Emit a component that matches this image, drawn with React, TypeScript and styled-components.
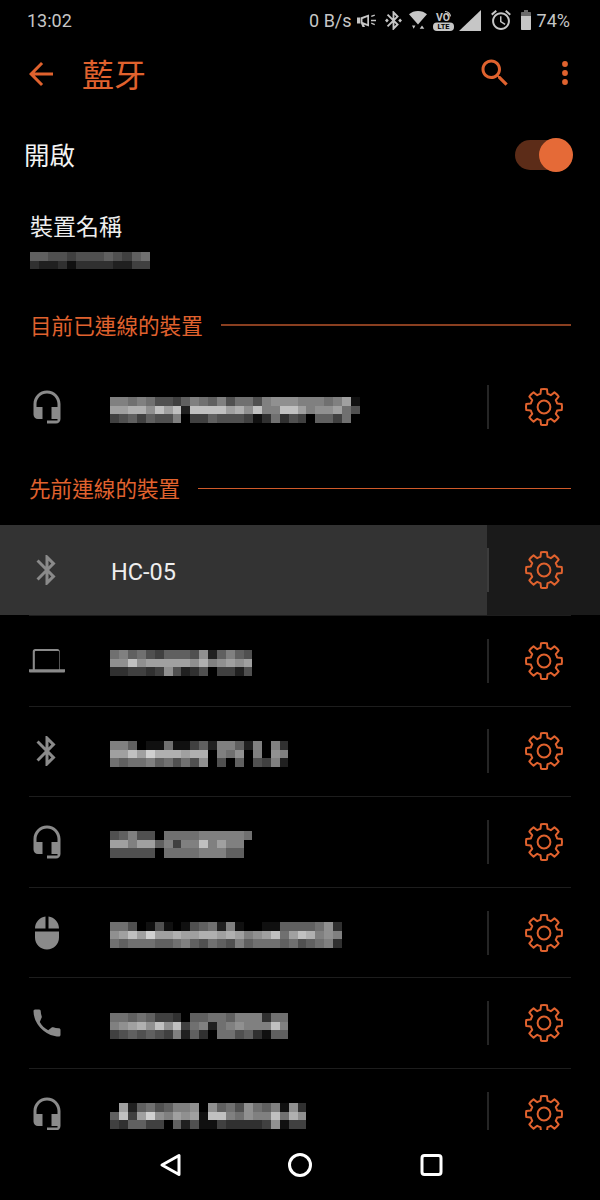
import React from "react";
import styled, { createGlobalStyle } from "styled-components";

const ORANGE = "#e0622e";
const GREY = "#8a8a8a";
const STATUS = "#c6c6c6";

const GlobalStyle = createGlobalStyle`
  html, body { margin: 0; padding: 0; background: #000; }
  body { font-family: Roboto, "Noto Sans CJK TC", sans-serif; }
`;

const Page = styled.div`
  position: relative;
  width: 600px;
  height: 1200px;
  overflow: hidden;
  background: #000;
  display: flex;
  flex-direction: column;
`;

const StatusBar = styled.div`
  flex: none;
  height: 40px;
  padding: 0 30px 0 27px;
  display: flex;
  align-items: center;
  justify-content: space-between;
  color: ${STATUS};
  font-size: 18px;
`;

const StatusGroup = styled.div`
  display: flex;
  align-items: center;
`;

const StatusText = styled.span<{ $after?: number }>`
  margin-right: ${(p) => p.$after ?? 0}px;
  white-space: nowrap;
`;

const StatusIcon = styled.svg<{ $after?: number }>`
  display: block;
  flex: none;
  fill: ${STATUS};
  margin-right: ${(p) => p.$after ?? 0}px;
`;

const Toolbar = styled.div`
  flex: none;
  height: 72px;
  display: flex;
  align-items: center;
  padding: 0 32px 0 23px;
  margin-top: -2px;
  margin-bottom: 2px;
`;

const ToolIcon = styled.svg<{ $lift?: number }>`
  display: block;
  flex: none;
  width: 36px;
  height: 36px;
  fill: ${ORANGE};
  margin-top: ${(p) => -(p.$lift ?? 0)}px;
`;

const Title = styled.div`
  margin: 4px 0 0 23px;
  flex: 1;
  color: ${ORANGE};
  font-size: 32px;
  line-height: 40px;
`;

const MenuDots = styled.svg`
  display: block;
  flex: none;
  width: 6px;
  height: 26px;
  margin: -2px 0 0 49.5px;
  fill: ${ORANGE};
`;

const SwitchRow = styled.div`
  flex: none;
  height: 86px;
  display: flex;
  align-items: center;
  justify-content: space-between;
  padding: 0 27px 0 24px;
`;

const SwitchLabel = styled.div`
  color: #f2f2f2;
  font-size: 25.5px;
  line-height: 34px;
  margin-top: 2px;
`;

const Track = styled.div`
  position: relative;
  width: 50px;
  height: 30px;
  margin-right: 8px;
  border-radius: 15px;
  background: #5c2c18;
`;

const Knob = styled.div`
  position: absolute;
  top: -2px;
  right: -8px;
  width: 34px;
  height: 34px;
  border-radius: 50%;
  background: #e56a37;
`;

const DeviceName = styled.div`
  flex: none;
  padding: 15px 0 0 30px;
  display: flex;
  flex-direction: column;
  align-items: flex-start;
  gap: 9px;
`;

const DeviceLabel = styled.div`
  color: #eeeeee;
  font-size: 23px;
  line-height: 30px;
`;

const SectionHeader = styled.div<{ $top: number; $left: number; $bottom: number }>`
  flex: none;
  height: 40px;
  margin: ${(p) => p.$top}px 29px ${(p) => p.$bottom}px ${(p) => p.$left}px;
  display: flex;
  align-items: center;
  gap: 18px;
`;

const SectionTitle = styled.div`
  color: ${ORANGE};
  font-size: 21.6px;
  line-height: 30px;
  white-space: nowrap;
`;

const SectionLine = styled.div<{ $color: string; $thick?: number }>`
  flex: 1;
  height: ${(p) => p.$thick ?? 1}px;
  margin-top: -4px;
  background: ${(p) => p.$color};
`;

const Row = styled.div<{ $active?: boolean; $height: number }>`
  flex: none;
  height: ${(p) => p.$height}px;
  display: flex;
  background: ${(p) => (p.$active ? "#333333" : "#000")};
`;

const RowMain = styled.div`
  flex: 1;
  min-width: 0;
  display: flex;
  align-items: center;
  padding-left: 28.5px;
  gap: 45px;
`;

const DeviceIcon = styled.svg`
  display: block;
  flex: none;
  width: 36px;
  height: 36px;
  fill: ${GREY};
`;

const DeviceTitle = styled.div`
  color: #eeeeee;
  font-size: 23.5px;
  line-height: 30px;
  margin: 3px 0 0 1.5px;
`;

const GearCell = styled.div<{ $active?: boolean }>`
  flex: none;
  width: 113px;
  display: flex;
  align-items: center;
  background: ${(p) => (p.$active ? "#1a1a1a" : "transparent")};
`;

const VRule = styled.div<{ $active?: boolean }>`
  flex: none;
  width: 2px;
  height: 44px;
  background: ${(p) => (p.$active ? "#3c3c3c" : "#252525")};
`;

const Gear = styled.svg`
  display: block;
  flex: none;
  width: 40px;
  height: 40px;
  margin-left: 35px;
  fill: none;
  stroke: ${ORANGE};
  stroke-width: 2;
  stroke-linejoin: round;
`;

const RowRule = styled.div`
  flex: none;
  height: 1px;
  margin: 0 29px;
  background: #1d1d1d;
`;

const MosaicSvg = styled.svg<{ $drop?: number }>`
  display: block;
  flex: none;
  margin-top: ${(p) => p.$drop ?? 0}px;
`;

const NavBar = styled.div`
  position: absolute;
  left: 0;
  right: 0;
  bottom: 0;
  height: 70px;
  background: #000;
  display: flex;
  align-items: center;
  justify-content: center;
  gap: 104.5px;
`;

const NavIcon = styled.svg`
  display: block;
  flex: none;
  width: 26px;
  height: 26px;
  fill: none;
  stroke: #ffffff;
  stroke-width: 3;
  stroke-linejoin: round;
`;

const gearPath = (() => {
  const c = 20;
  const outer = 18;
  const inner = 13.6;
  const n = 8;
  const pt = (r: number, deg: number) => {
    const a = ((deg - 90) * Math.PI) / 180;
    return `${(c + r * Math.cos(a)).toFixed(2)} ${(c + r * Math.sin(a)).toFixed(2)}`;
  };
  let d = "";
  for (let i = 0; i < n; i++) {
    const t = (360 / n) * i;
    d += `${i === 0 ? "M" : "L"}${pt(inner, t - 15)} `;
    d += `L${pt(outer, t - 9.5)} A${outer} ${outer} 0 0 1 ${pt(outer, t + 9.5)} `;
    d += `L${pt(inner, t + 15)} `;
    d += `A${inner} ${inner} 0 0 1 ${pt(inner, t + 30)} `;
  }
  return d + "Z";
})();

const CELL_H = 8.7;

function Mosaic({ rows, cellW = 8.93, drop = 5 }: { rows: string[]; cellW?: number; drop?: number }) {
  const cols = rows[0].length;
  const w = cols * cellW;
  const h = rows.length * CELL_H;
  return (
    <MosaicSvg $drop={drop} width={w} height={h} viewBox={`0 0 ${w} ${h}`} shapeRendering="crispEdges">
      {rows.flatMap((row, y) =>
        row.split("").map((ch, x) => {
          const v = Math.min(255, parseInt(ch, 16) * 16);
          return (
            <rect
              key={`${x}-${y}`}
              x={x * cellW}
              y={y * CELL_H}
              width={cellW + 0.5}
              height={CELL_H + 0.5}
              fill={`rgb(${v},${v},${v})`}
            />
          );
        })
      )}
    </MosaicSvg>
  );
}

const HEADSET =
  "M12 1c-4.97 0-9 4.03-9 9v7c0 1.66 1.34 3 3 3h3v-8H5v-2c0-3.87 3.13-7 7-7s7 3.13 7 7v2h-4v8h4v1h-7v2h6c1.66 0 3-1.34 3-3V10c0-4.97-4.03-9-9-9z";
const BLUETOOTH =
  "M17.71 7.71L12 2h-1v7.59L6.41 5 5 6.41 10.59 12 5 17.59 6.41 19 11 14.41V22h1l5.71-5.71-4.3-4.29 4.3-4.29zM13 5.83l1.88 1.88L13 9.59V5.83zm1.88 10.46L13 18.17v-3.76l1.88 1.88z";
const LAPTOP =
  "M20.5 17.5V5.6c0-.9-.7-1.6-1.6-1.6H4.1c-.9 0-1.6.7-1.6 1.6v11.9H0V19c0 .3.3.7.7.7h22.6c.4 0 .7-.4.7-.7v-1.5h-3.5zM3.9 6.100c0-.4.3-.7.7-.7h14.800c.4 0 .7.3.7.7v11.400H3.900V6.100z";
const MOUSE =
  "M13 1.07V9h7c0-4.08-3.05-7.44-7-7.93zM4 15c0 4.42 3.58 8 8 8s8-3.58 8-8v-4H4v4zm7-13.93C7.05 1.56 4 4.92 4 9h7V1.07z";
const PHONE =
  "M7.2 11.4c1.3 2.5 3 4.1 5.6 5.5l2.3-1.9c.3-.2.6-.3 1-.2 1.2.4 2.4.7 3.7.7.6 0 1.2.4 1.2 1V20c0 .6-.5 1-1 1C11.4 21 3 13 3 4c0-.5.4-1 1-1h2.8c.6 0 1 .5 1 1 0 1.3.3 2.5.7 3.7.1.4 0 .7-.2 1l-1.1 2.7z";

const rowsData: { icon: string; rows: string[]; active?: boolean; title?: string }[] = [
  { icon: BLUETOOTH, rows: [], active: true, title: "HC-05" },
  {
    icon: LAPTOP,
    rows: ["7867546665926865", "99c9aaaaa9b89a9a", "3344349523504425"],
  },
  {
    icon: BLUETOOTH,
    rows: ["88601171146288628083", "aacadbbbabb087908098", "76778675759050605482"],
  },
  {
    icon: HEADSET,
    rows: ["5685507777888887", "aa8aa68488c8a880", "5555507777888660"],
  },
  {
    icon: MOUSE,
    rows: [
      "77501510156728100116666793",
      "9acadaabaabbaba89ac7acb898",
      "76777667865765867776756783",
    ],
  },
  {
    icon: PHONE,
    rows: ["77676443066776888377", "89ab9c9c478278988 8c8".replace(" ", ""), "45656548263077563166"],
  },
  {
    icon: HEADSET,
    rows: ["0a26756889096759768193", "6c4ad98a9a1cc87988c7b9", "4366440625114333349144"],
  },
];

function RowGear({ active }: { active?: boolean }) {
  return (
    <GearCell $active={active}>
      <VRule $active={active} />
      <Gear viewBox="0 0 40 40">
        <path d={gearPath} />
        <circle cx="20" cy="20" r="6.4" />
      </Gear>
    </GearCell>
  );
}

export default function App() {
  return (
    <Page>
      <GlobalStyle />
      <StatusBar>
        <StatusText>13:02</StatusText>
        <StatusGroup>
          <StatusText $after={5}>0 B/s</StatusText>
          <StatusIcon $after={7} width="21" height="13" viewBox="0 0 21 13">
            <path d="M0 3.5h3V9.5H0zM3.5 3.5L12 .5V12.5L3.5 9.5zM5.5 4.9V8.1L10.3 9.900V2.900z" fillRule="evenodd" />
            <path d="M4 9.5h2.5L8 13H5.5zM14 5.7h5v1.5h-5zM14 1.8l3.5-1.4.5 1.3-3.5 1.4zM14 9.8l.5-1.3 3.5 1.4-.5 1.3z" />
          </StatusIcon>
          <StatusIcon $after={7} width="17" height="19" viewBox="3 2 18 20">
            <path d="M7 12l-2-2-2 2 2 2 2-2zm10.71-4.29L12 2h-1v7.59L6.41 5 5 6.41 10.59 12 5 17.59 6.41 19 11 14.41V22h1l5.71-5.71-4.3-4.29 4.3-4.29zM13 5.83l1.88 1.88L13 9.59V5.83zm1.88 10.46L13 18.17v-3.76l1.88 1.88zM19 10l-2 2 2 2 2-2-2-2z" />
          </StatusIcon>
          <StatusIcon $after={6} width="18" height="18" viewBox="0 0 18 18">
            <path d="M9 0C5.5 0 2.3 1.2 0 3.3L9 13.500 18 3.300C15.700 1.200 12.500 0 9 0z" />
            <path d="M3 14.500h3.400L4.700 17.800zM13 14.500l2.300 3.300h-4.600z" />
          </StatusIcon>
          <StatusIcon $after={5} width="21" height="21" viewBox="0 0 21 21">
            <text x="3" y="10.5" fontFamily="Roboto, sans-serif" fontSize="10.5" fontWeight="700">VO</text>
            <path d="M12 1.500c3 .2 5 2 5.500 4.800M13 4c1.300.2 2 1 2.300 2.300" fill="none" stroke={STATUS} strokeWidth="1.2" />
            <rect x="0" y="12.5" width="21" height="8.5" rx="4" />
            <text x="10.5" y="19.3" textAnchor="middle" fontFamily="Roboto, sans-serif" fontSize="7.5" fontWeight="700" fill="#000">LTE</text>
          </StatusIcon>
          <StatusIcon $after={10} width="22" height="21" viewBox="0 0 22 21">
            <path d="M0 21L22 0V21z" />
          </StatusIcon>
          <StatusIcon $after={10} width="20" height="20" viewBox="2 1.8 20 20.2">
            <path d="M22 5.72l-4.6-3.86-1.29 1.53 4.6 3.86L22 5.72zM7.88 3.39L6.6 1.86 2 5.71l1.29 1.53 4.59-3.85zM12.5 8H11v6l4.75 2.85.75-1.23-4-2.37V8zM12 4c-4.97 0-9 4.03-9 9s4.02 9 9 9c4.97 0 9-4.03 9-9s-4.03-9-9-9zm0 16c-3.87 0-7-3.13-7-7s3.13-7 7-7 7 3.13 7 7-3.13 7-7 7z" />
          </StatusIcon>
          <StatusIcon $after={6} width="10" height="20" viewBox="0 0 10 20">
            <path d="M3 0h4v2H3z" fill="#6a6a6a" />
            <path d="M0 3c0-.6.4-1 1-1h8c.6 0 1 .4 1 1v3H0z" fill="#6a6a6a" />
            <path d="M0 6h10v13c0 .6-.4 1-1 1H1c-.6 0-1-.4-1-1z" />
          </StatusIcon>
          <StatusText>74%</StatusText>
        </StatusGroup>
      </StatusBar>

      <Toolbar>
        <ToolIcon viewBox="0 0 24 24">
          <path d="M20 11H7.83l5.59-5.59L12 4l-8 8 8 8 1.41-1.41L7.83 13H20v-2z" />
        </ToolIcon>
        <Title>藍牙</Title>
        <ToolIcon $lift={3} viewBox="0 0 24 24">
          <path d="M15.5 14h-.79l-.28-.27C15.41 12.59 16 11.11 16 9.5 16 5.91 13.09 3 9.5 3S3 5.91 3 9.5 5.91 16 9.5 16c1.61 0 3.09-.59 4.23-1.57l.27.28v.79l5 4.99L20.49 19l-4.99-5zm-6 0C7.01 14 5 11.99 5 9.5S7.01 5 9.5 5 14 7.01 14 9.5 11.99 14 9.5 14z" />
        </ToolIcon>
        <MenuDots viewBox="0 0 6 26">
          <circle cx="3" cy="4" r="2.9" />
          <circle cx="3" cy="13" r="2.9" />
          <circle cx="3" cy="22" r="2.9" />
        </MenuDots>
      </Toolbar>

      <SwitchRow>
        <SwitchLabel>開啟</SwitchLabel>
        <Track>
          <Knob />
        </Track>
      </SwitchRow>

      <DeviceName>
        <DeviceLabel>裝置名稱</DeviceLabel>
        <Mosaic rows={["6655455565467", "3223133332244"]} cellW={9.23} drop={0} />
      </DeviceName>

      <SectionHeader $top={38} $bottom={15} $left={30}>
        <SectionTitle>目前已連線的裝置</SectionTitle>
        <SectionLine $color="#8a3f20" $thick={2} />
      </SectionHeader>

      <Row $height={90}>
        <RowMain>
          <DeviceIcon viewBox="0 0 24 24">
            <path d={HEADSET} />
          </DeviceIcon>
          <Mosaic
            rows={[
              "88787554687685775899988878a1",
              "aabb9cac2ccccab9c88cca899a75",
              "4564655804465554137354066470",
            ]}
          />
        </RowMain>
        <RowGear />
      </Row>

      <SectionHeader $top={18} $bottom={15} $left={29}>
        <SectionTitle>先前連線的裝置</SectionTitle>
        <SectionLine $color="#d05a2a" />
      </SectionHeader>

      {rowsData.map((d, i) => (
        <React.Fragment key={i}>
          <Row $active={d.active} $height={89.6}>
            <RowMain>
              <DeviceIcon viewBox="0 0 24 24">
                <path d={d.icon} />
              </DeviceIcon>
              {d.title ? <DeviceTitle>{d.title}</DeviceTitle> : <Mosaic rows={d.rows} />}
            </RowMain>
            <RowGear active={d.active} />
          </Row>
          <RowRule />
        </React.Fragment>
      ))}

      <NavBar>
        <NavIcon viewBox="0 0 26 26">
          <path d="M22 3.5V22.5L5 13z" />
        </NavIcon>
        <NavIcon viewBox="0 0 26 26">
          <circle cx="13" cy="13" r="10.5" />
        </NavIcon>
        <NavIcon viewBox="0 0 26 26">
          <rect x="4" y="3.5" width="19" height="19" rx="2.5" />
        </NavIcon>
      </NavBar>
    </Page>
  );
}
